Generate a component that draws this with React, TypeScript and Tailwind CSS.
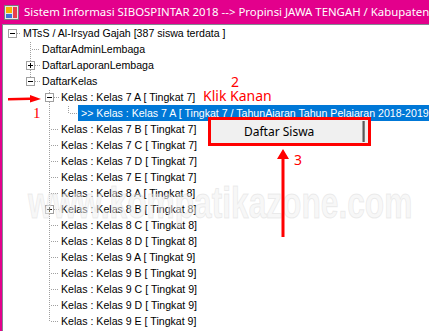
import React from "react";

type Row = {
  d: number;
  t: string;
  box?: "minus" | "plus";
  last?: boolean;
  anc?: number[];
  sel?: boolean;
};

const COL = [12, 30, 49, 68];
const HL = [21, 40, 59, 78];
const OFF = 3;

const rows: Row[] = [
  { d: 0, t: "MTsS / Al-Irsyad Gajah [387 siswa terdata ]", box: "minus", last: true },
  { d: 1, t: "DaftarAdminLembaga" },
  { d: 1, t: "DaftarLaporanLembaga", box: "plus" },
  { d: 1, t: "DaftarKelas", box: "minus", last: true },
  { d: 2, t: "Kelas : Kelas 7 A [ Tingkat 7]", box: "minus" },
  {
    d: 3,
    t: ">> Kelas : Kelas 7 A [ Tingkat 7 /  TahunAjaran Tahun Pelajaran 2018-2019 ]",
    last: true,
    anc: [2],
    sel: true,
  },
  { d: 2, t: "Kelas : Kelas 7 B [ Tingkat 7]" },
  { d: 2, t: "Kelas : Kelas 7 C [ Tingkat 7]" },
  { d: 2, t: "Kelas : Kelas 7 D [ Tingkat 7]" },
  { d: 2, t: "Kelas : Kelas 7 E [ Tingkat 7]" },
  { d: 2, t: "Kelas : Kelas 8 A [ Tingkat 8]" },
  { d: 2, t: "Kelas : Kelas 8 B [ Tingkat 8]", box: "plus" },
  { d: 2, t: "Kelas : Kelas 8 C [ Tingkat 8]" },
  { d: 2, t: "Kelas : Kelas 8 D [ Tingkat 8]" },
  { d: 2, t: "Kelas : Kelas 9 A [ Tingkat 9]" },
  { d: 2, t: "Kelas : Kelas 9 B [ Tingkat 9]" },
  { d: 2, t: "Kelas : Kelas 9 C [ Tingkat 9]" },
  { d: 2, t: "Kelas : Kelas 9 D [ Tingkat 9]" },
  { d: 2, t: "Kelas : Kelas 9 E [ Tingkat 9]", last: true },
];

function RowLines({ row }: { row: Row }) {
  const w = HL[row.d] - OFF;
  const dots: React.ReactNode[] = [];
  const dotV = (x: number, y0: number, y1: number) => {
    for (let y = y0; y < y1; y += 2)
      dots.push(<rect key={`v${x}-${y}`} x={x - OFF} y={y} width={1} height={1} />);
  };
  const dotH = (x0: number, x1: number, y: number) => {
    for (let x = x0; x <= x1; x += 2)
      dots.push(<rect key={`h${x}-${y}`} x={x - OFF} y={y} width={1} height={1} />);
  };
  const c = COL[row.d];
  (row.anc || []).forEach((k) => dotV(COL[k], 1, 16));
  if (row.d >= 1) {
    if (row.box) {
      dotV(c, 1, 4);
      if (!row.last) dotV(c, 13, 16);
    } else {
      dotV(c, 1, row.last ? 9 : 16);
    }
  }
  if (row.box) dotH(c + 5, c + 9, 8);
  else dotH(c + 2, c + 9, 8);
  return (
    <svg width={w} height={16} className="shrink-0 block">
      <g fill="#a0a0a0">{dots}</g>
      {row.box && (
        <g>
          <rect x={c - 4 - OFF + 0.5} y={4.5} width={8} height={8} fill="#fff" stroke="#a0a0a0" />
          <rect x={c - 2 - OFF} y={8} width={5} height={1} fill="#000" />
          {row.box === "plus" && <rect x={c - OFF} y={6} width={1} height={5} fill="#000" />}
        </g>
      )}
    </svg>
  );
}

export default function App() {
  return (
    <div className="relative w-[429px] h-[331px] overflow-hidden bg-[#e3008c] flex flex-col">
      {/* Title bar */}
      <div className="h-[24px] shrink-0 flex items-center pl-[4px] gap-[5px]">
        <svg width="15" height="15" viewBox="0 0 15 15" className="shrink-0">
          <rect x="0.5" y="0.5" width="14" height="14" fill="#e8e8e8" stroke="#7a7a7a" />
          <rect x="2" y="2" width="6" height="6" fill="#f6b400" />
          <rect x="9" y="2" width="4" height="11" fill="#e8404a" />
          <rect x="2" y="9" width="6" height="4" fill="#3f6fd8" />
        </svg>
        <span
          className="text-white text-[11.4px] whitespace-nowrap leading-none"
          style={{ fontFamily: '"Noto Sans", "Open Sans", sans-serif' }}
        >
          Sistem Informasi SIBOSPINTAR 2018 --&gt; Propinsi JAWA TENGAH / Kabupaten
        </span>
      </div>
      {/* Tree view */}
      <div className="flex-1 ml-[2px] border-l border-t border-[#828790] bg-white overflow-hidden">
        <div
          className="flex flex-col text-[10.6px] text-black"
          style={{ fontFamily: '"Liberation Sans", Arial, sans-serif' }}
        >
          {rows.map((r, i) => (
            <div key={i} className="h-[16px] flex items-stretch whitespace-nowrap">
              <RowLines row={r} />
              {r.sel ? (
                <span className="bg-[#0078d7] text-white pl-[3px] pr-[2px] leading-[16px]">{r.t}</span>
              ) : (
                <span className="pl-[2px] leading-[16px]">{r.t}</span>
              )}
            </div>
          ))}
        </div>
      </div>

      {/* Watermark */}
      <div
        aria-hidden="true"
        className="absolute left-[28px] top-[170px] pointer-events-none whitespace-nowrap text-[44px] font-bold origin-left scale-x-[0.72] text-[rgba(240,240,240,0.5)] [-webkit-text-stroke:1px_rgba(215,215,215,0.45)]"
        style={{ fontFamily: '"Liberation Sans", Arial, sans-serif' }}
      >
        www.kompatikazone.com
      </div>

      {/* Annotation 1 */}
      <svg className="absolute left-[8px] top-[94px]" width="34" height="10" viewBox="0 0 34 10">
        <polygon points="0,4 22,3.5 22,1 33,5 22,8.5 22,6 0,6.5" fill="#ff0000" />
      </svg>
      <span
        className="absolute left-[33px] top-[106px] text-[15px] leading-none text-[#ff0000]"
        style={{ fontFamily: '"Liberation Serif", serif' }}
      >
        1
      </span>

      {/* Annotation 2 */}
      <span
        className="absolute left-[231px] top-[75px] text-[14px] leading-none text-[#ff0000]"
        style={{ fontFamily: '"Noto Sans", "Open Sans", sans-serif' }}
      >
        2
      </span>
      <span
        className="absolute left-[203px] top-[89px] text-[14px] leading-none text-[#ff0000] whitespace-nowrap"
        style={{ fontFamily: '"Noto Sans", "Open Sans", sans-serif' }}
      >
        Klik Kanan
      </span>

      {/* Context menu */}
      <div className="absolute left-[208px] top-[117px] w-[163px] h-[29px] border-[3px] border-[#ff0000] bg-[#f0f0f0] flex items-center">
        <span
          className="ml-[33px] text-[12px] leading-none text-black"
          style={{ fontFamily: '"Noto Sans", "Open Sans", sans-serif' }}
        >
          Daftar Siswa
        </span>
        <div className="ml-auto mr-[3px] w-[3px] h-[21px] bg-gradient-to-r from-[#c8c8c8] via-[#5a5a5a] to-[#9a9a9a]" />
      </div>

      {/* Annotation 3 */}
      <svg className="absolute left-[276px] top-[149px]" width="14" height="89" viewBox="0 0 14 89">
        <polygon points="7,0 13,10 8.5,10 8.5,88 5.5,88 5.5,10 1,10" fill="#ff0000" />
      </svg>
      <span
        className="absolute left-[294px] top-[153px] text-[14px] leading-none text-[#ff0000]"
        style={{ fontFamily: '"Noto Sans", "Open Sans", sans-serif' }}
      >
        3
      </span>
    </div>
  );
}
